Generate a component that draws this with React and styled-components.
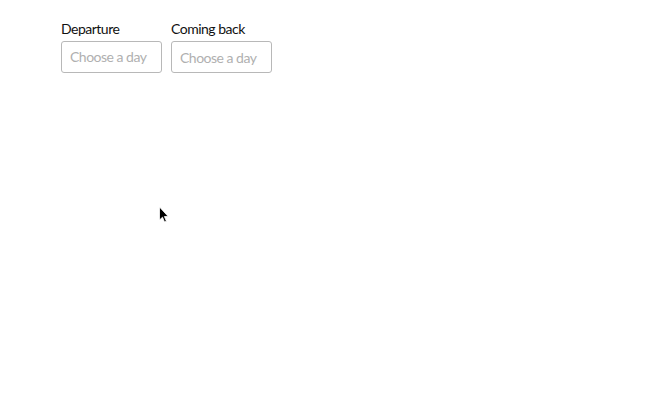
import React from 'react';
import styled, { createGlobalStyle } from 'styled-components';

const GlobalStyle = createGlobalStyle`
  html, body {
    margin: 0;
    padding: 0;
    background: #fff;
    font-family: Lato, "Open Sans", "Liberation Sans", sans-serif;
  }
`;

const Page = styled.div`
  position: relative;
  width: 648px;
  height: 414px;
  padding: 19px 0 0 61px;
  box-sizing: border-box;
`;

const Fields = styled.div`
  display: flex;
  gap: 9px;
`;

const Field = styled.label`
  display: flex;
  flex-direction: column;
  gap: 3px;
`;

const Label = styled.span`
  font-size: 14px;
  line-height: 19px;
  letter-spacing: -0.5px;
  color: #111;
`;

const DateInput = styled.input`
  box-sizing: border-box;
  width: 101px;
  height: 32px;
  padding: 0 0 ${(p) => (p.$low ? '0' : '2px')} 8px;
  border: 1px solid #b8b8b8;
  border-radius: 3px;
  font-family: inherit;
  font-size: 14px;
  letter-spacing: -0.5px;
  color: #333;
  outline: none;

  &::placeholder {
    color: #b0b0b0;
  }
`;

const Pointer = styled.svg`
  position: absolute;
  left: 158px;
  top: 206px;
  width: 12px;
  height: 19px;
`;

export default function App() {
  return (
    <Page>
      <GlobalStyle />
      <Fields>
        <Field>
          <Label>Departure</Label>
          <DateInput placeholder="Choose a day" />
        </Field>
        <Field>
          <Label>Coming back</Label>
          <DateInput placeholder="Choose a day" $low />
        </Field>
      </Fields>
      <Pointer viewBox="0 0 12 19">
        <path d="M1.5 1 L1.5 14 L4.5 11.2 L6.5 16 L8.4 15.2 L6.4 10.5 L10.2 10.5 Z" fill="#000" stroke="#fff" strokeWidth="0.8" />
      </Pointer>
    </Page>
  );
}
